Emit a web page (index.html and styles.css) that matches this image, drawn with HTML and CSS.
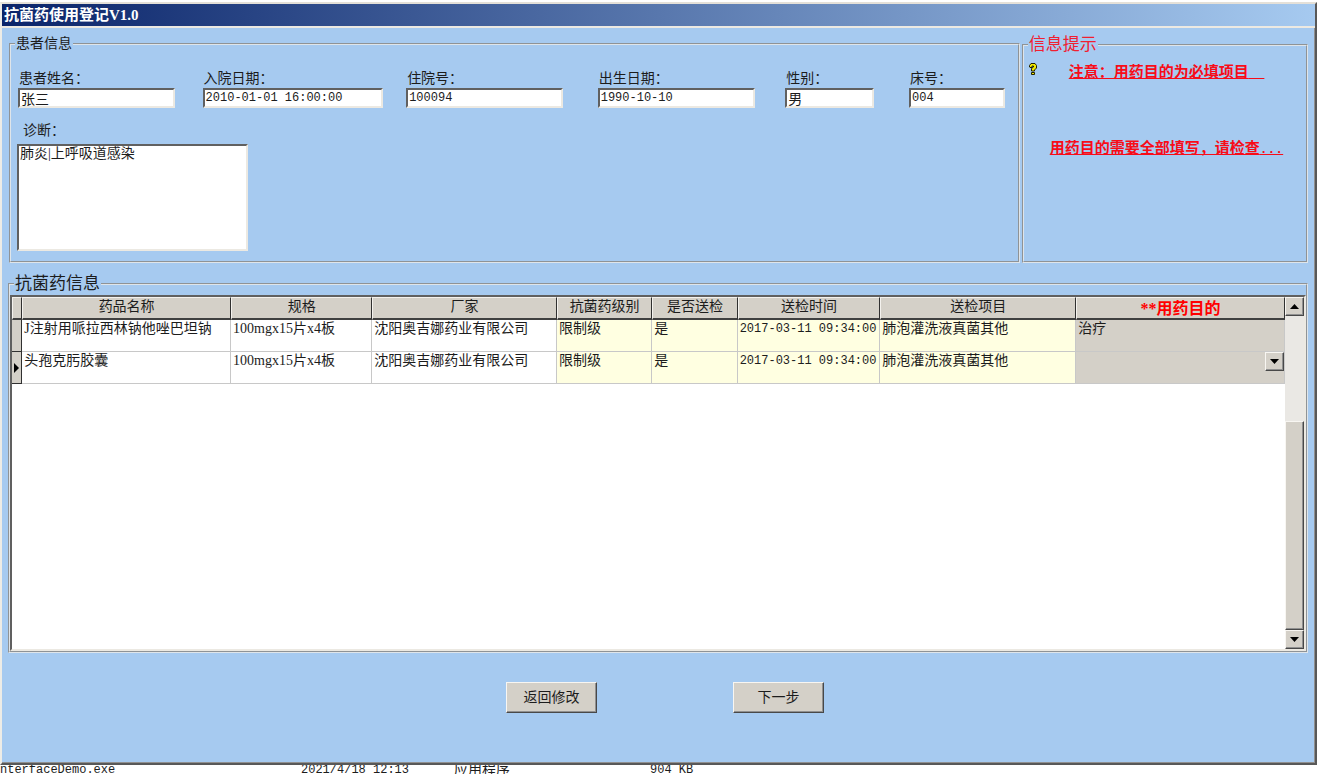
FILE: index.html
```html
<!DOCTYPE html>
<html lang="zh-CN">
<head>
<meta charset="utf-8">
<title>抗菌药使用登记V1.0</title>
<link rel="stylesheet" href="styles.css">
</head>
<body>
<div class="window">
  <header class="titlebar"><h1>抗菌药使用登记V1.0</h1></header>
  <main class="content">
    <div class="top-row">
      <fieldset class="group patient">
        <legend>患者信息</legend>
        <div class="fields">
          <div class="field"><label for="name">患者姓名：</label><input id="name" class="w-md" value="张三"></div>
          <div class="field"><label for="admit">入院日期：</label><input id="admit" class="w-lg mono" value="2010-01-01 16:00:00"></div>
          <div class="field"><label for="number">住院号：</label><input id="number" class="w-md mono" value="100094"></div>
          <div class="field"><label for="birth">出生日期：</label><input id="birth" class="w-md mono" value="1990-10-10"></div>
          <div class="field"><label for="sex">性别：</label><input id="sex" class="w-sm" value="男"></div>
          <div class="field"><label for="bed">床号：</label><input id="bed" class="w-bed mono" value="004"></div>
        </div>
        <div class="diagnosis">
          <label for="diagnosis">诊断：</label>
          <textarea id="diagnosis">肺炎|上呼吸道感染</textarea>
        </div>
      </fieldset>
      <fieldset class="group tips">
        <legend>信息提示</legend>
        <div class="tip-first">
          <svg class="help" viewBox="0 0 10 12" width="10" height="12" aria-hidden="true">
            <path d="M1.500 4V2.500L3 .5h4l1.500 2V5L6.500 7v1h-3V5.500l2-1.500V3H4v1.500H2zM3.500 9.500h3v2h-3z" fill="#f0e800" stroke="#202000" stroke-width="1"/>
          </svg>
          <p class="warning">注意：用药目的为必填项目<span class="mono-bold">&nbsp;&nbsp;</span></p>
        </div>
        <p class="warning tip-second">用药目的需要全部填写，请检查<span class="mono-bold">...</span></p>
      </fieldset>
    </div>
    <fieldset class="group drugs">
      <legend>抗菌药信息</legend>
      <div class="grid-box">
        <div class="grid-area">
          <table class="grid">
            <colgroup>
              <col class="c-mark"><col class="c-drug"><col class="c-spec"><col class="c-maker"><col class="c-level"><col class="c-sent"><col class="c-time"><col class="c-item"><col class="c-goal">
            </colgroup>
            <thead>
              <tr><th></th><th>药品名称</th><th>规格</th><th>厂家</th><th>抗菌药级别</th><th>是否送检</th><th>送检时间</th><th>送检项目</th><th class="required">**用药目的</th></tr>
            </thead>
            <tbody>
              <tr>
                <td class="mark"></td><td>J注射用哌拉西林钠他唑巴坦钠</td><td>100mgx15片x4板</td><td>沈阳奥吉娜药业有限公司</td>
                <td class="cream">限制级</td><td class="cream">是</td><td class="cream mono">2017-03-11 09:34:00</td><td class="cream">肺泡灌洗液真菌其他</td><td class="goal">治疗</td>
              </tr>
              <tr>
                <td class="mark"><svg viewBox="0 0 5 10" width="5" height="10" aria-hidden="true"><path d="M0 0l5 5-5 5z"/></svg></td><td>头孢克肟胶囊</td><td>100mgx15片x4板</td><td>沈阳奥吉娜药业有限公司</td>
                <td class="cream">限制级</td><td class="cream">是</td><td class="cream mono">2017-03-11 09:34:00</td><td class="cream">肺泡灌洗液真菌其他</td>
                <td class="goal picker">
                  <select aria-label="用药目的"><option></option><option>治疗</option></select>
                  <span class="arrow raised"><svg viewBox="0 0 9 5" width="9" height="5" aria-hidden="true"><path d="M0 0h9L4.500 5z"/></svg></span>
                </td>
              </tr>
            </tbody>
          </table>
        </div>
        <div class="scrollbar">
          <button class="step raised" type="button" aria-label="向上滚动"><svg viewBox="0 0 9 5" width="9" height="5"><path d="M0 5h9L4.500 0z"/></svg></button>
          <div class="track"><div class="thumb raised"></div></div>
          <button class="step raised" type="button" aria-label="向下滚动"><svg viewBox="0 0 9 5" width="9" height="5"><path d="M0 0h9L4.500 5z"/></svg></button>
        </div>
      </div>
    </fieldset>
    <div class="actions">
      <button class="action raised" type="button">返回修改</button>
      <button class="action raised" type="button">下一步</button>
    </div>
  </main>
</div>
<footer class="file-row">
  <span class="f-name mono">nterfaceDemo.exe</span><span class="f-date mono">2021/4/18 12:13</span><span class="f-type">应用程序</span><span class="mono">904 KB</span>
</footer>
</body>
</html>
```
FILE: styles.css
```css
* { box-sizing: border-box; }

body {
  margin: 0;
  padding-top: 2px;
  min-height: 100vh;
  display: flex;
  flex-direction: column;
  background: #fff;
  color: #1c1c1c;
  font: 14px/18px "Liberation Serif", "Noto Sans CJK SC", serif;
}

input, textarea, select, button { font: inherit; color: inherit; border-radius: 0; }
.mono { font-family: "Liberation Mono", "Noto Sans CJK SC", monospace; font-size: 12px; }

.window {
  flex: 1;
  display: flex;
  flex-direction: column;
  margin-right: 4px;
  background: #a6caf0;
  border-style: solid;
  border-width: 2px;
  border-color: #e4e0d8 #585858 #585858 #eeece6;
  box-shadow: inset -1px -1px #909090;
}

.titlebar {
  height: 24px;
  background: linear-gradient(to right, #0a246a, #a6caf0);
  border-bottom: 2px solid #ece9e2;
}
.titlebar h1 { margin: 0; padding-left: 2px; font-size: 15px; line-height: 22px; color: #fff; }

.content { flex: 1; display: flex; flex-direction: column; padding: 7px 7px 0 6px; }
.top-row { display: flex; gap: 2px; padding-left: 1px; }

.group { margin: 0; padding: 0; min-width: 0; border: 2px groove #dfe5ea; }
.group legend { padding: 0 1px; margin-left: 4px; }

.patient { flex: 1013; height: 228px; }
.tips { flex: 284; height: 228px; }
.tips legend { font-size: 17px; line-height: 20px; color: #f02030; }

.fields {
  display: grid;
  grid-template-columns: 185fr 204fr 192fr 188fr 124fr 109fr;
  padding: 17px 0 0 7px;
}
.field { display: flex; flex-direction: column; align-items: flex-start; }
.field label { padding-left: 1px; }

input, textarea {
  border: 2px solid;
  border-color: #606060 #ece9e2 #ece9e2 #606060;
  background: #fff;
  padding: 0 1px;
  outline: 0;
}
.field input { height: 20px; max-width: 96%; }
.field .w-md { width: 157px; }
.field .w-lg { width: 180px; }
.field .w-sm { width: 89px; }
.field .w-bed { width: 96px; }

.diagnosis { display: flex; flex-direction: column; align-items: flex-start; padding: 14px 0 0 6px; }
.diagnosis label { padding: 0 0 4px 6px; }
.diagnosis textarea { width: 231px; height: 107px; line-height: 16px; resize: none; overflow: hidden; }

.warning { margin: 0; color: #f80c18; font-size: 15px; font-weight: bold; text-decoration: underline; white-space: nowrap; }
.mono-bold { font-family: "Liberation Mono", monospace; font-size: 13px; }
.tip-first { display: flex; align-items: flex-start; gap: 31px; padding: 8px 0 0 4px; }
.tip-second { padding: 56px 0 0 26px; }

.drugs { margin-top: 10px; }
.drugs legend { font-size: 17px; line-height: 22px; }
.grid-box {
  min-height: 356px;
  display: flex;
  background: #fff;
  border: 2px solid;
  border-color: #606060 #ece9e2 #ece9e2 #606060;
}
.grid-area { flex: 1; min-width: 0; }

.grid { width: 100%; table-layout: fixed; border-collapse: separate; border-spacing: 0; }
.c-mark { width: 9px; }
.c-drug, .c-goal { width: 16.4%; }
.c-spec { width: 11.1%; }
.c-maker { width: 14.5%; }
.c-level { width: 7.5%; }
.c-sent { width: 6.7%; }
.c-time { width: 11.2%; }
.c-item { width: 15.4%; }

.grid th {
  height: 23px;
  padding: 0;
  vertical-align: top;
  background: #d4d0c8;
  border-right: 1px solid #303030;
  border-bottom: 2px solid #404040;
  border-left: 1px solid #f4f2ee;
  border-top: 1px solid #f4f2ee;
  font-weight: normal;
  line-height: 18px;
}
.grid th.required { color: #ff0000; font-size: 16px; font-weight: bold; vertical-align: bottom; }
.grid td {
  height: 32px;
  padding: 0 2px;
  vertical-align: top;
  white-space: nowrap;
  border-right: 1px solid #c8c8c8;
  border-bottom: 1px solid #c8c8c8;
}
.grid td.cream { background: #ffffe1; }
.grid td.goal { background: #d4d0c8; }
.grid td.mark {
  padding: 0;
  background: #d4d0c8;
  border-color: #303030;
  vertical-align: middle;
  line-height: 10px;
}
.grid td.mark svg { display: block; margin-left: 2px; }
.grid td.picker { position: relative; padding: 0; }
.picker select { display: block; width: 100%; height: 30px; border: 0; background: transparent; appearance: none; outline: 0; }
.arrow { position: absolute; top: 0; right: 0; width: 19px; height: 19px; pointer-events: none; }

.raised {
  background: #d4d0c8;
  border: 1px solid;
  border-color: #f8f6f2 #484848 #484848 #f8f6f2;
  box-shadow: inset -1px -1px #909090;
}
.arrow, .step { display: flex; align-items: center; justify-content: center; padding: 0; }
.scrollbar { width: 19px; display: flex; flex-direction: column; }
.step { height: 19px; width: 100%; }
.track { flex: 1; display: flex; flex-direction: column; justify-content: flex-end; background: #eae8e4; }
.thumb { height: 66.6%; }

.actions { display: flex; gap: 136px; padding: 29px 0 50px 38.3%; }
.action { width: 91px; height: 31px; padding: 0; }

.file-row { height: 9px; overflow: hidden; display: flex; align-items: center; white-space: nowrap; }
.file-row span { line-height: 18px; }
.f-name { width: 301px; }
.f-date { width: 153px; }
.f-type { width: 196px; }
```
